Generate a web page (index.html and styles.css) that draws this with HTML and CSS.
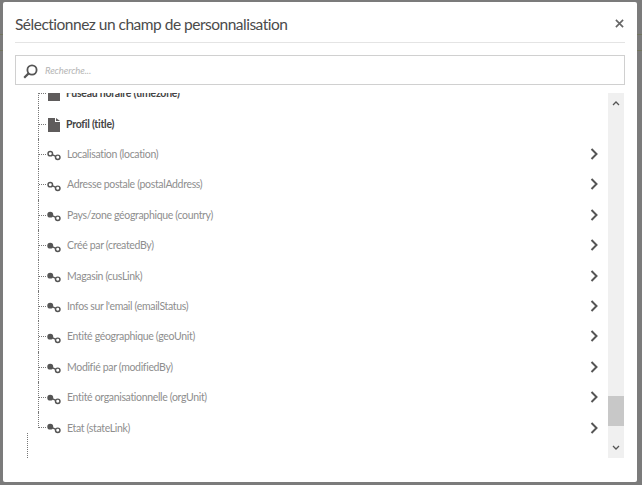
FILE: index.html
```html
<!DOCTYPE html>
<html lang="fr">
<head>
<meta charset="utf-8">
<title>Sélectionnez un champ de personnalisation</title>
<link rel="stylesheet" href="styles.css">
</head>
<body>
<svg width="0" height="0" class="defs">
  <defs>
    <symbol id="doc" viewBox="0 0 12 14"><path d="M0 0H7V4H12V14H0Z" fill="#5f5c5c"/><path d="M8 0L12 3H8Z" fill="#5f5c5c"/></symbol>
    <symbol id="link-o" viewBox="0 0 15 11"><circle cx="3.5" cy="3.5" r="2.4" fill="#fff" stroke="#555" stroke-width="1.6"/><circle cx="11.5" cy="7.5" r="2.4" fill="#fff" stroke="#555" stroke-width="1.6"/><path d="M5.6 4.6L9.3 6.4" stroke="#555" stroke-width="1.4"/></symbol>
    <symbol id="link-f" viewBox="0 0 15 11"><circle cx="3.5" cy="3.5" r="3.2" fill="#555"/><circle cx="11.5" cy="7.5" r="2.4" fill="#fff" stroke="#555" stroke-width="1.6"/><path d="M5.6 4.6L9.3 6.4" stroke="#555" stroke-width="1.4"/></symbol>
    <symbol id="chev" viewBox="0 0 8 12"><path d="M1.5 1L6.5 6L1.5 11" fill="none" stroke="#555" stroke-width="2"/></symbol>
  </defs>
</svg>
<div class="backdrop">
  <div class="line line-a"></div>
  <div class="line line-b"></div>
  <main class="dialog">
    <header class="head">
      <h1 class="title">Sélectionnez un champ de personnalisation</h1>
      <svg class="close" viewBox="0 0 10 10" width="9" height="9"><path d="M1 1L9 9M9 1L1 9" stroke="#666" stroke-width="1.8" fill="none"/></svg>
    </header>
    <div class="search">
      <svg class="lens" viewBox="0 0 15 15" width="15" height="15"><circle cx="9" cy="6" r="4.6" fill="none" stroke="#555" stroke-width="1.8"/><path d="M5.6 9.4L1.2 13.8" stroke="#555" stroke-width="2.2"/></svg>
      <span class="placeholder">Recherche...</span>
    </div>
    <div class="body">
      <div class="tree">
        <div class="tree-inner">
          <div class="row strong clipped"><svg class="ico-doc"><use href="#doc"/></svg><span class="label">Fuseau horaire (timezone)</span></div>
          <div class="row strong"><svg class="ico-doc"><use href="#doc"/></svg><span class="label">Profil (title)</span></div>
          <div class="row"><svg class="ico-link"><use href="#link-o"/></svg><span class="label">Localisation (location)</span><svg class="chev"><use href="#chev"/></svg></div>
          <div class="row"><svg class="ico-link"><use href="#link-o"/></svg><span class="label">Adresse postale (postalAddress)</span><svg class="chev"><use href="#chev"/></svg></div>
          <div class="row"><svg class="ico-link"><use href="#link-f"/></svg><span class="label">Pays/zone géographique (country)</span><svg class="chev"><use href="#chev"/></svg></div>
          <div class="row"><svg class="ico-link"><use href="#link-f"/></svg><span class="label">Créé par (createdBy)</span><svg class="chev"><use href="#chev"/></svg></div>
          <div class="row"><svg class="ico-link"><use href="#link-f"/></svg><span class="label">Magasin (cusLink)</span><svg class="chev"><use href="#chev"/></svg></div>
          <div class="row"><svg class="ico-link"><use href="#link-f"/></svg><span class="label">Infos sur l'email (emailStatus)</span><svg class="chev"><use href="#chev"/></svg></div>
          <div class="row"><svg class="ico-link"><use href="#link-f"/></svg><span class="label">Entité géographique (geoUnit)</span><svg class="chev"><use href="#chev"/></svg></div>
          <div class="row"><svg class="ico-link"><use href="#link-f"/></svg><span class="label">Modifié par (modifiedBy)</span><svg class="chev"><use href="#chev"/></svg></div>
          <div class="row"><svg class="ico-link"><use href="#link-f"/></svg><span class="label">Entité organisationnelle (orgUnit)</span><svg class="chev"><use href="#chev"/></svg></div>
          <div class="row last"><svg class="ico-link"><use href="#link-f"/></svg><span class="label">Etat (stateLink)</span><svg class="chev"><use href="#chev"/></svg></div>
          <div class="tail"></div>
        </div>
      </div>
      <div class="scrollbar">
        <svg class="arrow" viewBox="0 0 8 5" width="8" height="5"><path d="M1 4L4 1L7 4" fill="none" stroke="#555" stroke-width="1.3"/></svg>
        <div class="track"><div class="thumb"></div></div>
        <svg class="arrow" viewBox="0 0 8 5" width="8" height="5"><path d="M1 1L4 4L7 1" fill="none" stroke="#555" stroke-width="1.3"/></svg>
      </div>
    </div>
  </main>
</div>
</body>
</html>
```
FILE: styles.css
```css
* { box-sizing: border-box; }
html, body { margin: 0; height: 100%; overflow: hidden; }
.defs { position: absolute; }
body { font-family: "Lato", "Open Sans", sans-serif; }
.backdrop {
  position: relative;
  width: 642px;
  height: 485px;
  background: #7b7b7b;
  padding: 2px 5px 3px 3px;
}
.line { position: absolute; left: 0; right: 0; height: 1px; background: #72755f; }
.line-a { top: 34px; }
.line-b { top: 50px; }
.dialog {
  position: relative;
  height: 480px;
  background: #fff;
  border-radius: 2px;
  padding: 0 12px 0 12px;
  display: flex;
  flex-direction: column;
}
.head {
  height: 41px;
  border-bottom: 1px solid #e4e4e4;
  display: flex;
  align-items: center;
  justify-content: space-between;
  padding-top: 3px;
  padding-right: 1px;
  flex: none;
}
.title { margin: 0; font-size: 15.5px; letter-spacing: -0.5px; font-weight: 400; color: #4b4b4b; }
.search {
  margin-top: 12px;
  height: 30px;
  flex: none;
  border: 1px solid #d0d0d0;
  display: flex;
  align-items: center;
  padding-left: 7px;
  gap: 7px;
}
.lens { margin-top: 2px; }
.placeholder { font-size: 9.5px; letter-spacing: -0.1px; font-style: italic; color: #b5b5b5; }
.body { display: flex; height: 365px; margin-top: 8px; flex: none; }
.tree { flex: 1; overflow: hidden; }
.tree-inner { margin-top: -15px; margin-left: 23px; position: relative; }
.row {
  height: 30.4px;
  display: flex;
  align-items: center;
  position: relative;
  padding-left: 8px;
  padding-right: 6px;
  border-left: 1px dotted #777;
  font-size: 10.5px;
  letter-spacing: -0.33px;
  color: #8e8e8e;
}
.row::before {
  content: "";
  position: absolute;
  left: 0;
  top: 50%;
  width: 7px;
  border-top: 1px dotted #777;
}
.row.last { height: 16px; overflow: visible; align-items: flex-end; }
.row.last .label, .row.last svg { position: relative; top: 6px; }
.row.last::before { top: 15px; }
.strong { color: #444; font-weight: 700; letter-spacing: -0.25px; }
.ico-doc { width: 12px; height: 14px; margin: 2px 6px 0 1px; flex: none; }
.ico-link { width: 14px; height: 11px; margin: 4px 6px 0 0; flex: none; }
.label { flex: 1; white-space: nowrap; }
.chev { width: 8px; height: 12px; flex: none; }
.tail { height: 25px; width: 0; margin: 5px 0 0 -11px; border-left: 1px dotted #777; }
.scrollbar {
  width: 16px;
  background: #f0f0f0;
  margin-left: 4px;
  margin-right: 1px;
  display: flex;
  flex-direction: column;
  align-items: center;
  padding: 8px 0;
  gap: 5px;
}
.track { flex: 1; width: 100%; display: flex; flex-direction: column; justify-content: flex-end; padding-bottom: 14px; }
.thumb { height: 30px; background: #c8c8c8; }
```
